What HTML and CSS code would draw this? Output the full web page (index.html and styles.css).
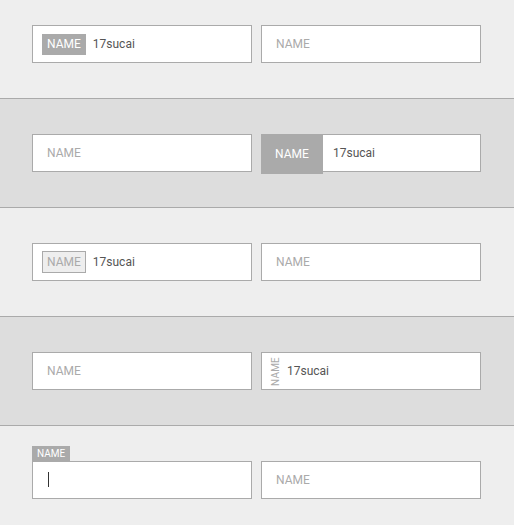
FILE: index.html
```html
<!DOCTYPE html>
<html lang="zh">
<head>
    <meta charset="utf-8">
    <link rel="stylesheet" href="styles.css">
</head>
<body>
    <!-- Style 1 : etiquette pleine -->
    <section class="row row-light first">
        <div class="field">
            <span class="tag tag-solid">NAME</span>
            <input type="text" value="17sucai">
        </div>
        <div class="field">
            <input type="text" placeholder="NAME">
        </div>
    </section>

    <!-- Style 2 : bloc a gauche -->
    <section class="row row-dark">
        <div class="field">
            <input type="text" placeholder="NAME">
        </div>
        <div class="field">
            <span class="tag tag-block">NAME</span>
            <input type="text" value="17sucai">
        </div>
    </section>

    <!-- Style 3 : etiquette contour -->
    <section class="row row-light">
        <div class="field">
            <span class="tag tag-outline">NAME</span>
            <input type="text" value="17sucai">
        </div>
        <div class="field">
            <input type="text" placeholder="NAME">
        </div>
    </section>

    <!-- Style 4 : etiquette verticale -->
    <section class="row row-dark">
        <div class="field">
            <input type="text" placeholder="NAME">
        </div>
        <div class="field">
            <span class="tag tag-vertical">NAME</span>
            <input type="text" value="17sucai" class="tight">
        </div>
    </section>

    <!-- Style 5 : etiquette au-dessus -->
    <section class="row row-light last">
        <div class="field focused">
            <span class="tag tag-top">NAME</span>
            <input type="text">
            <span class="caret"></span>
        </div>
        <div class="field">
            <input type="text" placeholder="NAME">
        </div>
    </section>
</body>
</html>
```

FILE: styles.css
```css
body {
    margin: 0;
    font-family: Roboto, "Liberation Sans", sans-serif;
    background-color: #eee;
}

.row {
    display: flex;
    align-items: flex-start;
    gap: 9px;
    padding: 35px 32px;
    border-bottom: 1px solid #aaa;
}

.row.first {
    padding-top: 25px;
}

.row.last {
    border-bottom: none;
}

.row-light {
    background-color: #eee;
}

.row-dark {
    background-color: #ddd;
}

.field {
    position: relative;
    display: flex;
    align-items: center;
    width: 220px;
    height: 38px;
    box-sizing: border-box;
    border: 1px solid #aaa;
    background-color: #fff;
}

    .field input {
        flex: 1;
        min-width: 0;
        height: 100%;
        border: none;
        outline: none;
        padding: 0 14px;
        background: transparent;
        font-family: inherit;
        font-size: 12px;
        color: #555;
    }

        .field input::placeholder {
            color: #aaa;
        }

    .field .tag + input {
        padding-left: 7px;
    }

        .field .tag + input.tight {
            padding-left: 7px;
        }

.tag {
    font-size: 12px;
    white-space: nowrap;
}

.tag-solid {
    margin-left: 9px;
    padding: 3px 5px;
    line-height: 15px;
    background-color: #aaa;
    color: #fff;
}

.tag-block {
    align-self: flex-start;
    margin: -1px 0 0 -1px;
    width: 62px;
    height: 40px;
    line-height: 40px;
    text-align: center;
    background-color: #aaa;
    color: #fff;
}

    .tag-block + input {
        padding-left: 10px !important;
    }

.tag-outline {
    margin-left: 9px;
    padding: 2px 4px;
    line-height: 16px;
    border: 1px solid #aaa;
    background-color: #eee;
    color: #aaa;
}

.tag-vertical {
    margin-left: 10px;
    font-size: 10px;
    line-height: 8px;
    letter-spacing: 0.2px;
    color: #aaa;
    writing-mode: vertical-rl;
    transform: rotate(180deg);
}

.tag-top {
    position: absolute;
    left: -1px;
    top: -16px;
    padding: 0 5px;
    font-size: 10px;
    line-height: 15px;
    background-color: #aaa;
    color: #fff;
}

.caret {
    position: absolute;
    left: 15px;
    top: 10px;
    width: 1px;
    height: 15px;
    background-color: #333;
}
```
